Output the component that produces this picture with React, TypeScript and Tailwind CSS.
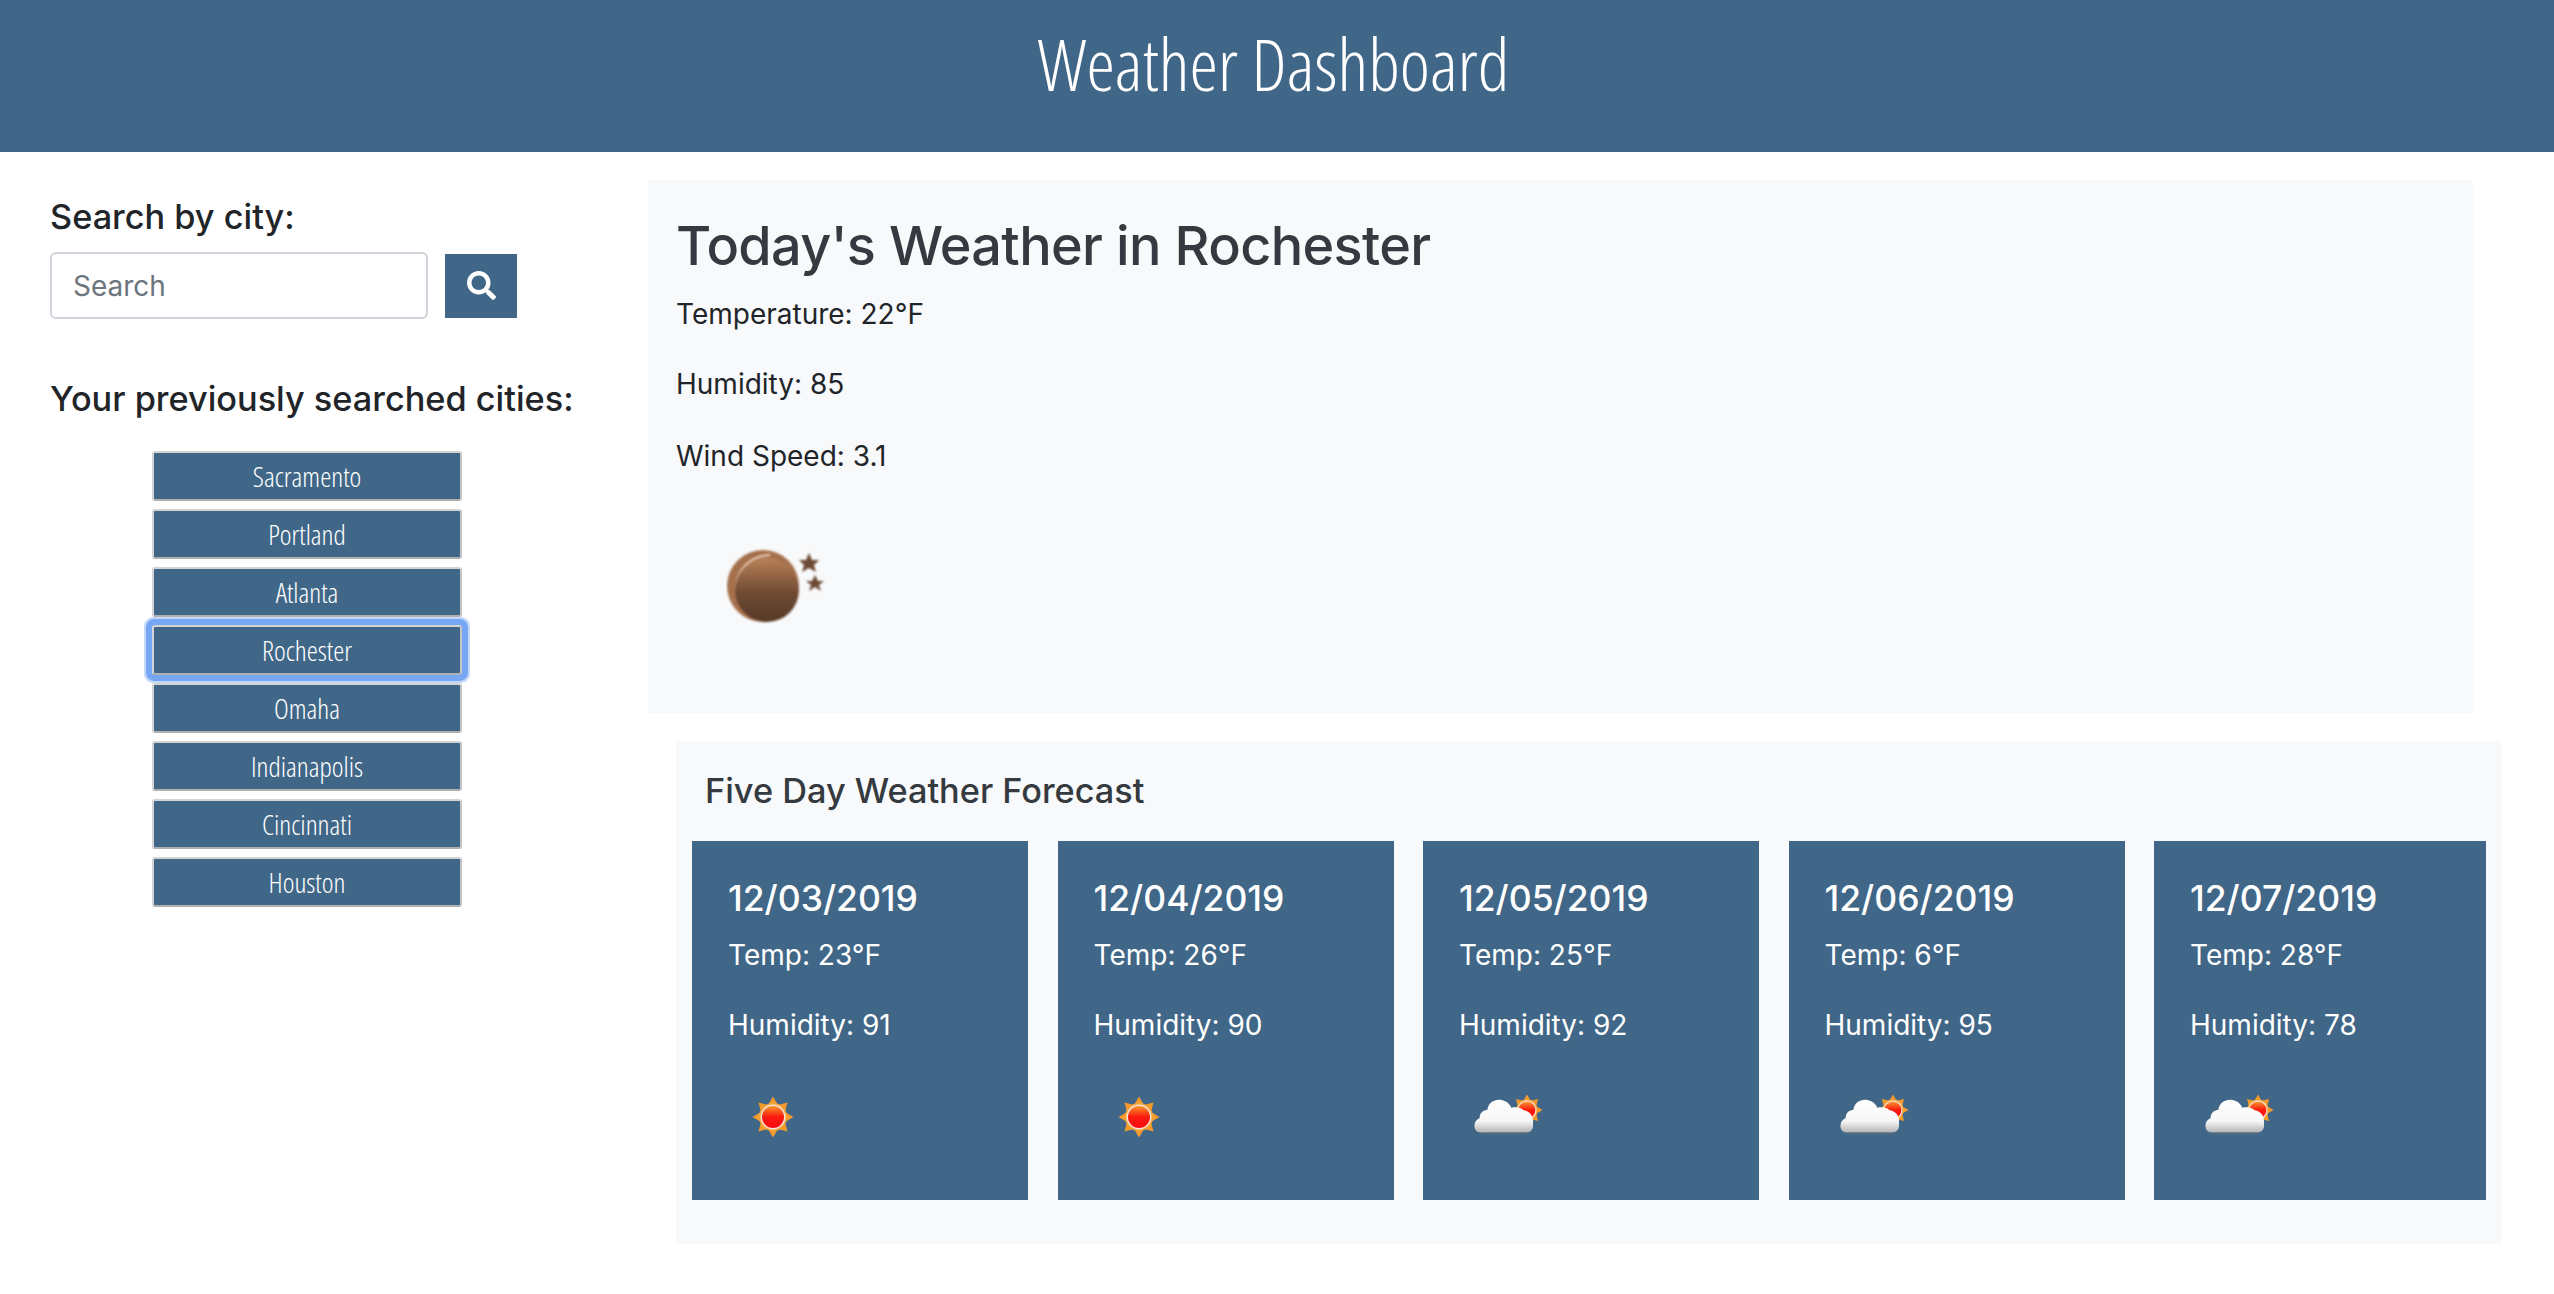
import React from "react";
import { FaSearch } from "react-icons/fa";

// ===== data =====
const CITIES = ["Sacramento", "Portland", "Atlanta", "Rochester", "Omaha", "Indianapolis", "Cincinnati", "Houston"];

const FORECAST = [
  { date: "12/03/2019", temp: "23°F", humidity: 91, icon: "sun", width: "w-[336px]" },
  { date: "12/04/2019", temp: "26°F", humidity: 90, icon: "sun", width: "w-[336px]" },
  { date: "12/05/2019", temp: "25°F", humidity: 92, icon: "cloud", width: "w-[336px]" },
  { date: "12/06/2019", temp: "6°F", humidity: 95, icon: "cloud", width: "w-[336px]" },
  { date: "12/07/2019", temp: "28°F", humidity: 78, icon: "cloud", width: "w-[332px]" },
];

const RAYS = [0, 45, 90, 135, 180, 225, 270, 315];

// ===== icons =====
function MoonIcon() {
  return (
    <svg width="100" height="84" viewBox="0 0 100 84" className="block">
      <defs>
        <linearGradient id="moonFill" x1="0" y1="0" x2="0" y2="1">
          <stop offset="0" stopColor="#b98158" />
          <stop offset="0.55" stopColor="#6f4a33" />
          <stop offset="1" stopColor="#573a28" />
        </linearGradient>
      </defs>
      <g style={{ filter: "blur(1px)" }}>
        <circle cx="37" cy="44" r="36" fill="#a5704c" />
        <path d="M10 50 C9 30 22 14 44 13" fill="none" stroke="#edd0b8" strokeWidth="2" />
        <circle cx="41" cy="48" r="32" fill="url(#moonFill)" />
        <g transform="translate(-3 -3)">
          <polygon points="86,14 89,21 96,21 91,26 93,33 86,29 79,33 81,26 76,21 83,21" fill="#6d4a34" />
        </g>
        <g transform="translate(-4 -3)">
          <polygon points="93,36 96,42 102,42 97,46 99,52 93,48 87,52 89,46 84,42 90,42" fill="#6d4a34" />
        </g>
      </g>
    </svg>
  );
}

function SunShape() {
  return (
    <>
      {RAYS.map((deg) => (
        <polygon key={deg} points="-5,-12 0,-20.5 5,-12" fill="#f39a2c" transform={`rotate(${deg})`} />
      ))}
      <circle r="14" fill="#f6a63a" />
      <circle r="12.5" fill="#f8e2d6" />
      <circle r="11" fill="url(#sunFill)" />
    </>
  );
}

function SunIcon() {
  return (
    <svg width="48" height="48" viewBox="-24 -24 48 48" className="mt-[3px] block">
      <defs>
        <linearGradient id="sunFill" x1="0" y1="0" x2="0" y2="1">
          <stop offset="0" stopColor="#f9952a" />
          <stop offset="0.5" stopColor="#fb1a10" />
          <stop offset="1" stopColor="#fb0a10" />
        </linearGradient>
      </defs>
      <g style={{ filter: "blur(0.5px)" }}>
        <SunShape />
      </g>
    </svg>
  );
}

function CloudIcon() {
  return (
    <svg width="76" height="48" viewBox="0 0 76 48" className="block">
      <defs>
        <linearGradient id="sunFill" x1="0" y1="0" x2="0" y2="1">
          <stop offset="0" stopColor="#f9952a" />
          <stop offset="0.5" stopColor="#fb1a10" />
          <stop offset="1" stopColor="#fb0a10" />
        </linearGradient>
        <linearGradient id="cloudFill" x1="0" y1="0" x2="0" y2="1">
          <stop offset="0" stopColor="#ffffff" />
          <stop offset="0.65" stopColor="#f7f7f7" />
          <stop offset="1" stopColor="#b4b4b4" />
        </linearGradient>
      </defs>
      <g style={{ filter: "blur(0.6px)" }}>
        <g transform="translate(55 19) scale(0.76)">
          <SunShape />
        </g>
        <g transform="scale(1.09 1.12)">
          <path
            d="M8 37 C1 37 0 27 7 24 C7 19 11 17 14 17 C15 10 21 7 27 8 C32 9 35 12 36 15 C40 14 45 15 47 17 C52 18 56 21 56 27 L56 31 C56 35 53 37 50 37 Z"
            fill="url(#cloudFill)"
          />
          <path d="M9 38 L50 38" stroke="#56697c" strokeWidth="1.5" />
        </g>
      </g>
    </svg>
  );
}

// ===== page =====
export default function App() {
  return (
    <div className="min-h-[1294px] bg-white font-['Inter','Liberation_Sans',sans-serif] text-[#212529]">
      <header className="flex h-[152px] items-start justify-center bg-[#416788] pr-[7px]">
        <h1 className="mt-[20px] font-['Open_Sans',sans-serif] text-[72px] leading-[86px] font-light text-white [font-stretch:75%]">
          Weather Dashboard
        </h1>
      </header>

      <div className="flex">
        <aside className="w-[648px] shrink-0 pt-[43px] pl-[50px]">
          <h5 className="text-[34.3px] leading-[44px] font-medium">Search by city:</h5>
          <div className="mt-[13px] flex items-center gap-[17px]">
            <input
              placeholder="Search"
              className="h-[67px] w-[378px] rounded-[6px] border-2 border-[#ced4da] bg-white px-[21px] text-[28px] placeholder:text-[#6c757d]"
            />
            <button className="flex h-[64px] w-[72px] items-center justify-center bg-[#416788] text-white">
              <FaSearch size={29} />
            </button>
          </div>
          <h5 className="mt-[58px] text-[34.3px] leading-[44px] font-medium">Your previously searched cities:</h5>
          <div className="mt-[30px] ml-[102px] flex w-[310px] flex-col gap-[8px]">
            {CITIES.map((city) => (
              <button
                key={city}
                className={
                  "h-[50px] rounded-[3px] border-2 border-t-[#d4d4d4] border-r-[#c4c4c4] border-b-[#b0b0b0] border-l-[#d4d4d4] bg-[#416788] font-['Open_Sans',sans-serif] text-[28px] leading-[44px] font-light text-white [font-stretch:75%] " +
                  (city === "Rochester" ? "shadow-[0_0_0_6px_#76a7f4,0_0_0_8px_#c4d9fa]" : "")
                }
              >
                {city}
              </button>
            ))}
          </div>
        </aside>

        <main className="w-[1854px] pt-[28px]">
          <section className="h-[533px] w-[1825px] bg-[#f8f9fa] px-[28px] pt-[30px]">
            <h2 className="text-[54px] leading-[72px] font-medium tracking-[-0.65px] text-[#343a40]">Today's Weather in Rochester</h2>
            <p className="mt-[12px] text-[28px] leading-[40px]">Temperature: 22°F</p>
            <p className="mt-[30px] text-[28px] leading-[40px]">Humidity: 85</p>
            <p className="mt-[32px] text-[28px] leading-[40px]">Wind Speed: 3.1</p>
            <div className="mt-[66px] ml-[50px]">
              <MoonIcon />
            </div>
          </section>

          <section className="mt-[28px] ml-[28px] h-[503px] w-[1826px] bg-[#f8f9fa] px-[16px] pt-[28px]">
            <h4 className="pl-[13px] text-[34.3px] leading-[44px] font-medium text-[#343a40]">Five Day Weather Forecast</h4>
            <div className="mt-[28px] flex gap-[29.5px]">
              {FORECAST.map((day) => (
                <div key={day.date} className={"h-[359px] shrink-0 bg-[#416788] px-[36px] pt-[36px] text-white " + day.width}>
                  <h5 className="text-[35.5px] leading-[44px] font-medium">{day.date}</h5>
                  <p className="mt-[14px] text-[28px] leading-[40px]">Temp: {day.temp}</p>
                  <p className="mt-[30px] text-[28px] leading-[40px]">Humidity: {day.humidity}</p>
                  <div className={"mt-[46px] flex h-[48px] items-center " + (day.icon === "sun" ? "ml-[21px]" : "ml-[13px]")}>
                    {day.icon === "sun" ? <SunIcon /> : <CloudIcon />}
                  </div>
                </div>
              ))}
            </div>
          </section>
        </main>
      </div>
    </div>
  );
}
